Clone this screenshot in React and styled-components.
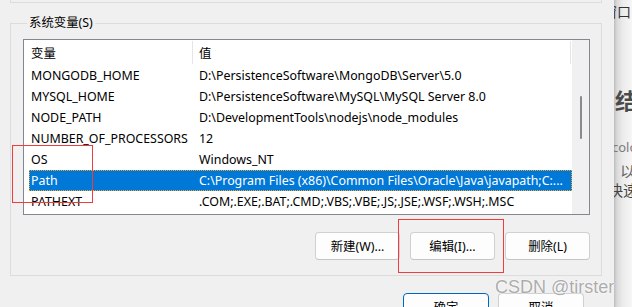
import React from "react";
import styled, { createGlobalStyle } from "styled-components";

const GlobalStyle = createGlobalStyle`
  html, body {
    margin: 0;
    padding: 0;
    background: #f0f0f0;
  }
  body {
    font-family: "Segoe UI", "Noto Sans", "Noto Sans CJK SC", sans-serif;
    font-size: 12.4px;
    color: #000;
  }
`;

const Screen = styled.div`
  position: relative;
  display: flex;
  width: 632px;
  height: 307px;
  overflow: hidden;
`;

const Dialog = styled.div`
  width: 614px;
  flex: none;
  background: #f0f0f0;
  padding: 0 12px 0 10px;
  box-sizing: border-box;
`;

const PrevGroup = styled.div`
  height: 2px;
  border: 1px solid #dcdcdc;
  border-top: none;
`;

const GroupBox = styled.fieldset`
  margin: 12px 0 0;
  padding: 8px 11px 15px 12px;
  border: 1px solid #dcdcdc;
  min-width: 0;
`;

const Legend = styled.legend`
  margin-left: 4px;
  padding: 0 2px;
  line-height: 16px;
  font-size: 12.4px;
`;

const ListBox = styled.div`
  display: flex;
  height: 176px;
  border: 1px solid #828790;
  background: #fff;
  box-sizing: border-box;
  overflow: hidden;
`;

const ListBody = styled.div`
  flex: 1;
  min-width: 0;
  overflow: hidden;
`;

const Header = styled.div`
  display: grid;
  grid-template-columns: 163px 1fr;
  height: 25px;
  margin-left: 5px;
  align-items: stretch;
`;

const HeaderCell = styled.div`
  display: flex;
  align-items: center;
  padding-left: ${(p) => (p.$first ? "2px" : "6px")};
  ${(p) =>
    !p.$first &&
    `border-left: 1px solid #e5e5e5; border-right: 1px solid #e5e5e5; margin-right: 1px; margin-top: 1px; margin-bottom: 1px;`}
`;

const Row = styled.div`
  display: grid;
  grid-template-columns: 163px 1fr;
  height: 21px;
  margin-left: 5px;
  align-items: center;
  white-space: nowrap;
  background: ${(p) => (p.$selected ? "#0078d7" : "transparent")};
  color: ${(p) => (p.$selected ? "#fff" : "#000")};
  outline: ${(p) => (p.$selected ? "1px dotted #f5a623" : "none")};
  outline-offset: -1px;
`;

const Cell = styled.div`
  overflow: hidden;
  padding-left: ${(p) => (p.$first ? "2px" : "7px")};
`;

const ScrollBar = styled.div`
  width: 17px;
  flex: none;
  background: #f0f0f0;
  display: flex;
  justify-content: center;
  padding-top: 56px;
  box-sizing: border-box;
`;

const Thumb = styled.div`
  width: 2px;
  height: 43px;
  border-radius: 1px;
  background: #8a8a8a;
`;

const ButtonRow = styled.div`
  display: flex;
  justify-content: flex-end;
  gap: 10px;
  margin-top: 17px;
`;

const Button = styled.button`
  width: ${(p) => p.$w || 85}px;
  height: 28px;
  padding: 0;
  font: inherit;
  color: #000;
  background: #fdfdfd;
  border: 1px solid ${(p) => (p.$default ? "#0067c0" : "#d0d0d0")};
  border-bottom-color: ${(p) => (p.$default ? "#0067c0" : "#c4c4c4")};
  border-radius: 4px;
`;

const FooterRow = styled.div`
  display: flex;
  justify-content: flex-end;
  gap: 9px;
  margin-top: 17px;
  padding-right: 18px;
`;

const Highlight = styled.div`
  position: absolute;
  border: 1px solid #f03c3c;
  pointer-events: none;
`;

const Watermark = styled.div`
  position: absolute;
  left: 495px;
  top: 277px;
  font-family: "Liberation Sans", Arial, sans-serif;
  font-size: 18px;
  color: rgba(150, 150, 150, 0.8);
  text-shadow: 0 0 2px #fff, 0 0 1px #fff;
  white-space: nowrap;
`;

const BackPage = styled.div`
  flex: 1;
  overflow: hidden;
  background: linear-gradient(to right, #bdbdbd 0px, #dadada 3px, #ececec 9px, #f6f6f6 18px);
  display: flex;
  flex-direction: column;
  white-space: nowrap;
  font-family: "Noto Sans", "Noto Sans CJK SC", sans-serif;
`;

const Frag = styled.div`
  margin-left: ${(p) => p.$x}px;
  margin-top: ${(p) => p.$top}px;
  font-size: ${(p) => p.$size}px;
  font-weight: ${(p) => (p.$bold ? 700 : 400)};
  color: ${(p) => p.$color};
  line-height: ${(p) => p.$size + 2}px;
`;

const variables = [
  ["MONGODB_HOME", "D:\\PersistenceSoftware\\MongoDB\\Server\\5.0"],
  ["MYSQL_HOME", "D:\\PersistenceSoftware\\MySQL\\MySQL Server 8.0"],
  ["NODE_PATH", "D:\\DevelopmentTools\\nodejs\\node_modules"],
  ["NUMBER_OF_PROCESSORS", "12"],
  ["OS", "Windows_NT"],
  ["Path", "C:\\Program Files (x86)\\Common Files\\Oracle\\Java\\javapath;C:..."],
  ["PATHEXT", ".COM;.EXE;.BAT;.CMD;.VBS;.VBE;.JS;.JSE;.WSF;.WSH;.MSC"],
];

export default function App() {
  return (
    <>
      <GlobalStyle />
      <Screen>
        <Dialog>
          <PrevGroup />
          <GroupBox>
            <Legend>系统变量(S)</Legend>
            <ListBox>
              <ListBody>
                <Header>
                  <HeaderCell $first>变量</HeaderCell>
                  <HeaderCell>值</HeaderCell>
                </Header>
                {variables.map(([name, value]) => (
                  <Row key={name} $selected={name === "Path"}>
                    <Cell $first>{name}</Cell>
                    <Cell>{value}</Cell>
                  </Row>
                ))}
              </ListBody>
              <ScrollBar>
                <Thumb />
              </ScrollBar>
            </ListBox>
            <ButtonRow>
              <Button>新建(W)...</Button>
              <Button>编辑(I)...</Button>
              <Button>删除(L)</Button>
            </ButtonRow>
          </GroupBox>
          <FooterRow>
            <Button $w={86} $default>确定</Button>
            <Button $w={86}>取消</Button>
          </FooterRow>
        </Dialog>
        <BackPage>
          <Frag $x={-11} $top={4} $size={14} $color="#333">窗口</Frag>
          <Frag $x={1} $top={68} $size={22} $bold $color="#4a4a4a">结构</Frag>
          <Frag $x={-2} $top={28} $size={13} $color="#7a7a7a">color</Frag>
          <Frag $x={6} $top={8} $size={15} $color="#666">以</Frag>
          <Frag $x={-6} $top={2} $size={15} $color="#444">快速</Frag>
        </BackPage>
        <Highlight style={{ left: 12, top: 145, width: 79, height: 56 }} />
        <Highlight style={{ left: 398, top: 219, width: 104, height: 52 }} />
        <Watermark>CSDN @tirster</Watermark>
      </Screen>
    </>
  );
}
